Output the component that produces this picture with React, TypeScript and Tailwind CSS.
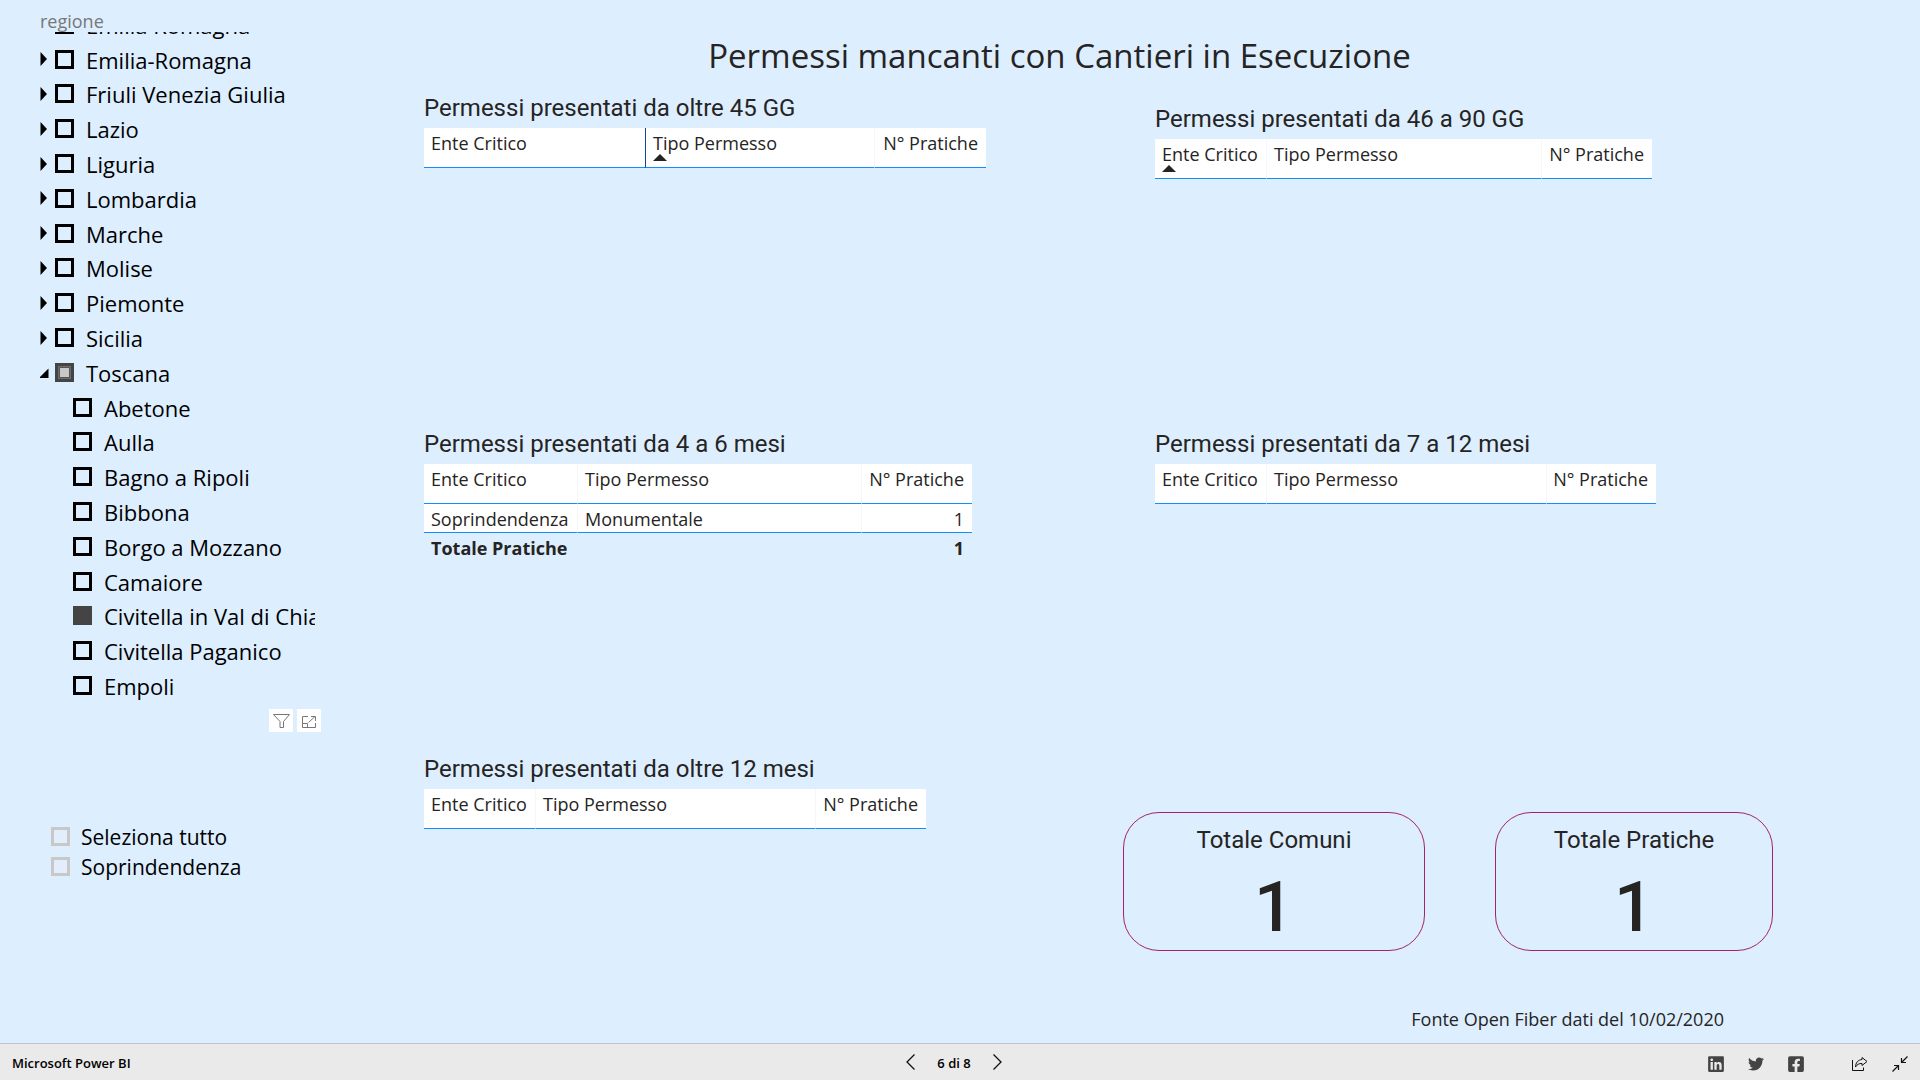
import { useEffect, useRef } from "react"
import clsx from "clsx"
import { FaFacebookSquare, FaLinkedin, FaTwitter } from "react-icons/fa"

interface TreeItem {
    id: string
    label: string
    level: 0 | 1
    state?: "checked" | "partial"
    expanded?: boolean
}

interface PermitTable {
    title: string
    widths: [number, number, number]
    sorted?: "ente" | "tipo"
    resizing?: boolean
    rows?: [string, string, number][]
    total?: number
}

const treeItems: TreeItem[] = [
    { id: "emilia", label: "Emilia Romagna", level: 0 },
    { id: "emilia-romagna", label: "Emilia-Romagna", level: 0 },
    { id: "friuli", label: "Friuli Venezia Giulia", level: 0 },
    { id: "lazio", label: "Lazio", level: 0 },
    { id: "liguria", label: "Liguria", level: 0 },
    { id: "lombardia", label: "Lombardia", level: 0 },
    { id: "marche", label: "Marche", level: 0 },
    { id: "molise", label: "Molise", level: 0 },
    { id: "piemonte", label: "Piemonte", level: 0 },
    { id: "sicilia", label: "Sicilia", level: 0 },
    { id: "toscana", label: "Toscana", level: 0, state: "partial", expanded: true },
    { id: "abetone", label: "Abetone", level: 1 },
    { id: "aulla", label: "Aulla", level: 1 },
    { id: "bagno", label: "Bagno a Ripoli", level: 1 },
    { id: "bibbona", label: "Bibbona", level: 1 },
    { id: "borgo", label: "Borgo a Mozzano", level: 1 },
    { id: "camaiore", label: "Camaiore", level: 1 },
    { id: "civitella-chiana", label: "Civitella in Val di Chiana", level: 1, state: "checked" },
    { id: "civitella-paganico", label: "Civitella Paganico", level: 1 },
    { id: "empoli", label: "Empoli", level: 1 },
]

const oltre45: PermitTable = {
    title: "Permessi presentati da oltre 45 GG",
    widths: [222, 229, 111],
    sorted: "tipo",
    resizing: true,
}
const da46a90: PermitTable = {
    title: "Permessi presentati da 46 a 90 GG",
    widths: [112, 275, 110],
    sorted: "ente",
}
const da4a6: PermitTable = {
    title: "Permessi presentati da 4 a 6 mesi",
    widths: [154, 284, 110],
    rows: [["Soprindendenza", "Monumentale", 1]],
    total: 1,
}
const da7a12: PermitTable = {
    title: "Permessi presentati da 7 a 12 mesi",
    widths: [112, 280, 109],
}
const oltre12: PermitTable = {
    title: "Permessi presentati da oltre 12 mesi",
    widths: [112, 280, 110],
}

function TreeRow({ item }: { item: TreeItem }) {
    const ref = useRef<HTMLInputElement>(null)

    useEffect(() => {
        if (ref.current) ref.current.indeterminate = item.state === "partial"
    }, [item.state])

    return (
        <li className={clsx("flex flex-1 items-center", item.level === 1 && "pl-[33px]")}>
            {item.level === 0 && (
                <button aria-label={`Espandi ${item.label}`} className="w-[15px] shrink-0">
                    <svg viewBox="0 0 15 14" className="h-[14px] w-[15px]">
                        {item.expanded ? <path d="M-1 13 L8.500 3.500 V13 Z" /> : <path d="M0.500 0 L7 7 L0.500 14 Z" />}
                    </svg>
                </button>
            )}
            <input
                ref={ref}
                id={item.id}
                type="checkbox"
                defaultChecked={item.state === "checked"}
                className={clsx(
                    "h-[19px] w-[19px] shrink-0 appearance-none border-[3px]",
                    !item.state && "border-black",
                    item.state === "checked" && "border-[#444] bg-[#444]",
                    item.state === "partial" &&
                        "border-[#444] bg-[#c8c8c8] shadow-[inset_0_0_0_1px_#6e6e6e,inset_0_0_0_2px_#555]"
                )}
            />
            <label htmlFor={item.id} className="pt-px pl-3 text-[22px] leading-8 whitespace-nowrap">
                {item.label}
            </label>
        </li>
    )
}

function SortArrow() {
    return (
        <svg viewBox="0 0 14 7" className="mt-px h-[7px] w-[14px]" fill="#252423">
            <path d="M0 7 L7 0 L14 7 Z" />
        </svg>
    )
}

function PermitSection({ table, className }: { table: PermitTable; className?: string }) {
    const { title, widths, sorted, resizing, rows = [], total } = table
    const width = widths[0] + widths[1] + widths[2]

    return (
        <section className={className}>
            <h2 className="font-[Roboto,sans-serif] text-[24px] leading-7">{title}</h2>
            <table className="mt-[6px] table-fixed border-separate border-spacing-0 text-lg leading-5" style={{ width }}>
                <colgroup>
                    {widths.map((w, i) => <col key={i} style={{ width: w }} />)}
                </colgroup>
                <thead>
                    <tr className="h-10 bg-white align-top whitespace-nowrap">
                        <th
                            className={clsx(
                                "border-r border-b border-b-[#118dff] pt-[5px] pl-[7px] text-left font-normal",
                                resizing ? "border-r-[#0b4a8c]" : "border-r-[#f4f8fc]"
                            )}
                        >
                            Ente Critico
                            {sorted === "ente" && <SortArrow />}
                        </th>
                        <th className="border-r border-b border-r-[#f4f8fc] border-b-[#118dff] pt-[5px] pl-[7px] text-left font-normal">
                            Tipo Permesso
                            {sorted === "tipo" && <SortArrow />}
                        </th>
                        <th className="border-b border-[#118dff] pt-[5px] pr-2 text-right font-normal">N° Pratiche</th>
                    </tr>
                </thead>
                <tbody>
                    {rows.map(([ente, tipo, n]) => (
                        <tr key={ente} className="h-[29px] bg-white align-top">
                            <td className="border-r border-b border-r-[#f4f8fc] border-b-[#118dff] pt-[5px] pl-[7px]">{ente}</td>
                            <td className="border-r border-b border-r-[#f4f8fc] border-b-[#118dff] pt-[5px] pl-[7px]">{tipo}</td>
                            <td className="border-b border-[#118dff] pt-[5px] pr-2 text-right">{n}</td>
                        </tr>
                    ))}
                </tbody>
                {total !== undefined && (
                    <tfoot>
                        <tr className="align-top font-bold">
                            <td colSpan={2} className="pt-[5px] pl-[7px]">Totale Pratiche</td>
                            <td className="pt-[5px] pr-2 text-right">{total}</td>
                        </tr>
                    </tfoot>
                )}
            </table>
        </section>
    )
}

function Card({ title, value, className }: { title: string; value: number; className: string }) {
    return (
        <div
            className={clsx(
                "rounded-[36px] border border-[#a5216f] pt-[13px] pb-[7px] text-center font-[Roboto,sans-serif]",
                className
            )}
        >
            <h3 className="text-[24px] leading-7">{title}</h3>
            <p className="mt-[17px] text-[70px] leading-[72px] font-medium">{value}</p>
        </div>
    )
}

function Slicers() {
    return (
        <aside className="w-[424px] shrink-0 pl-10 text-black">
            <h2 className="h-8 pt-[9px] text-lg leading-6 text-[#777]">regione</h2>
            <div className="flex h-[671px] w-[275px] flex-col justify-end overflow-hidden">
                <ul className="flex h-[696px] shrink-0 flex-col">
                    {treeItems.map((item) => <TreeRow key={item.id} item={item} />)}
                </ul>
            </div>

            {/* Visual header actions */}
            <div className="mt-[6px] flex w-[281px] justify-end gap-1">
                <button aria-label="Filtri" className="flex h-[23px] w-6 items-center justify-center bg-white">
                    <svg viewBox="0 0 17 16" className="h-4 w-[17px]" fill="none" stroke="#777" strokeWidth="1">
                        <path d="M0.500 1.500 H16.500 L10.500 8.500 V14.500 H7 V8.500 Z" />
                    </svg>
                </button>
                <button aria-label="Modalità messa a fuoco" className="flex h-[23px] w-6 items-center justify-center bg-white">
                    <svg viewBox="0 0 16 14" className="mt-[2px] h-[14px] w-4" fill="none" stroke="#777" strokeWidth="1">
                        <path d="M7 1.500 H1.500 V12.500 H14.500 V8 M1.500 8.500 H6.500 V12.500 M7.500 7.500 L14 1.500 M10 1.500 H14.500 V6" />
                    </svg>
                </button>
            </div>

            <ul className="mt-[89px] pl-[11px]">
                {["Seleziona tutto", "Soprindendenza"].map((label) => (
                    <li key={label} className="flex h-[30px] items-center">
                        <input
                            id={label}
                            type="checkbox"
                            className="h-[19px] w-[19px] appearance-none border-[3px] border-[#c8c8c8] bg-[#e2eefb]"
                        />
                        <label htmlFor={label} className="pt-px pl-[11px] text-[21px] leading-7">{label}</label>
                    </li>
                ))}
            </ul>
        </aside>
    )
}

function Footer() {
    return (
        <footer className="grid h-[37px] grid-cols-[1fr_auto_1fr] items-center border-t border-[#bcc4d0] bg-[#eaeaea] px-3 text-[13px] text-black">
            <a href="#" className="pt-1 font-semibold">Microsoft Power BI</a>
            <nav className="mr-3 flex items-center gap-[22px]">
                <button aria-label="Pagina precedente">
                    <svg viewBox="0 0 9 16" className="h-4 w-[9px]" fill="none" stroke="#111" strokeWidth="1.3">
                        <path d="M8.500 0.500 L1 8 L8.500 15.500" />
                    </svg>
                </button>
                <span className="pt-1 font-semibold">6 di 8</span>
                <button aria-label="Pagina successiva">
                    <svg viewBox="0 0 9 16" className="h-4 w-[9px]" fill="none" stroke="#111" strokeWidth="1.3">
                        <path d="M0.500 0.500 L8 8 L0.500 15.500" />
                    </svg>
                </button>
            </nav>
            <div className="flex items-center justify-end gap-6 pt-1 text-[#444]">
                <a href="#" aria-label="LinkedIn"><FaLinkedin className="h-[18px] w-4" /></a>
                <a href="#" aria-label="Twitter"><FaTwitter className="h-4 w-4" /></a>
                <a href="#" aria-label="Facebook"><FaFacebookSquare className="h-[18px] w-4" /></a>
                <button aria-label="Condividi" className="ml-6">
                    <svg viewBox="0 0 16 16" className="h-4 w-4" fill="none" stroke="#111" strokeWidth="1">
                        <path d="M0.500 4 V14.500 H11.500 V11.500" />
                        <path d="M10 1.500 L15 5.500 L10 9.500 V7.500 C7 7.300 5 8.500 3.500 11 C3.500 7 6 3.800 10 3.500 Z" />
                    </svg>
                </button>
                <button aria-label="Esci da schermo intero">
                    <svg viewBox="0 0 16 16" className="h-4 w-4" fill="none" stroke="#111" strokeWidth="1.200">
                        <path d="M15.500 0.500 L9.500 6.500 M9.500 2 V6.500 H14 M0.500 15.500 L6.500 9.500 M2 9.500 H6.500 V14" />
                    </svg>
                </button>
            </div>
        </footer>
    )
}

export default function App() {
    return (
        <div className="flex min-h-screen flex-col bg-[#ddeeff] font-['Open_Sans',sans-serif] text-[#252423]">
            <div className="flex flex-1">
                <Slicers />
                <main className="min-w-0 flex-1 pt-9">
                    <h1 className="pr-[225px] text-center text-[33px] leading-10">
                        Permessi mancanti con Cantieri in Esecuzione
                    </h1>
                    <div className="grid grid-cols-[731fr_765fr] grid-rows-[354px_325px_auto]">
                        <PermitSection table={oltre45} className="pt-[18px]" />
                        <PermitSection table={da46a90} className="pt-[29px]" />
                        <PermitSection table={da4a6} />
                        <PermitSection table={da7a12} />
                        <PermitSection table={oltre12} />
                        <div className="pt-[57px]">
                            <div className="-ml-8 flex gap-[70px]">
                                <Card title="Totale Comuni" value={1} className="w-[302px]" />
                                <Card title="Totale Pratiche" value={1} className="w-[278px]" />
                            </div>
                            <p className="mt-14 pr-[196px] text-right text-lg leading-6">
                                Fonte Open Fiber dati del 10/02/2020
                            </p>
                        </div>
                    </div>
                </main>
            </div>
            <Footer />
        </div>
    )
}
